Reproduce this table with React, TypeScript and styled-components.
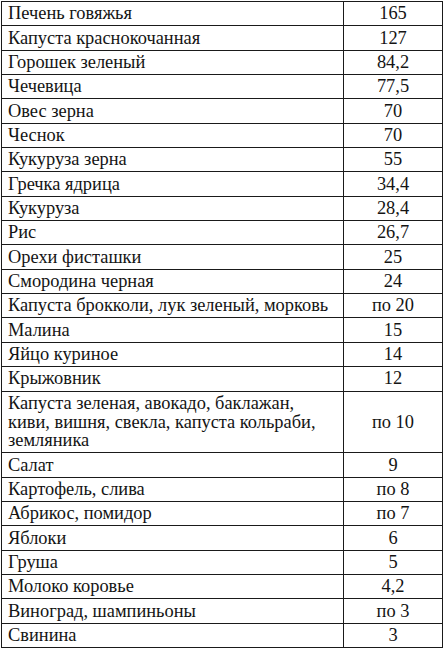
import React from 'react';
import styled, { createGlobalStyle } from 'styled-components';

const GlobalStyle = createGlobalStyle`
    html, body {
        margin: 0;
        padding: 0;
        background: #fff;
    }
    body {
        padding: 1px 0 0 1px;
    }
`;

const Table = styled.table`
    border-collapse: collapse;
    table-layout: fixed;
    width: 442px;
    font-family: "Liberation Serif", "DejaVu Serif", serif;
    font-size: 18.4px;
    color: #141414;
`;

const Row = styled.tr``;

const NameCell = styled.td`
    border: 1px solid #1a1a1a;
    padding: 2.3px 4px 2.3px 6px;
    line-height: 18.75px;
    text-align: left;
    vertical-align: middle;
    white-space: nowrap;
`;

const ValueCell = styled.td`
    border: 1px solid #1a1a1a;
    width: 90px;
    padding: 2.3px 4px;
    line-height: 18.75px;
    text-align: center;
    vertical-align: middle;
`;

const rows: [React.ReactNode, string][] = [
    ['Печень говяжья', '165'],
    ['Капуста краснокочанная', '127'],
    ['Горошек зеленый', '84,2'],
    ['Чечевица', '77,5'],
    ['Овес зерна', '70'],
    ['Чеснок', '70'],
    ['Кукуруза зерна', '55'],
    ['Гречка ядрица', '34,4'],
    ['Кукуруза', '28,4'],
    ['Рис', '26,7'],
    ['Орехи фисташки', '25'],
    ['Смородина черная', '24'],
    ['Капуста брокколи, лук зеленый, морковь', 'по 20'],
    ['Малина', '15'],
    ['Яйцо куриное', '14'],
    ['Крыжовник', '12'],
    [<>Капуста зеленая, авокадо, баклажан,<br />киви, вишня, свекла, капуста кольраби,<br />земляника</>, 'по 10'],
    ['Салат', '9'],
    ['Картофель, слива', 'по 8'],
    ['Абрикос, помидор', 'по 7'],
    ['Яблоки', '6'],
    ['Груша', '5'],
    ['Молоко коровье', '4,2'],
    ['Виноград, шампиньоны', 'по 3'],
    ['Свинина', '3'],
];

export default function App() {
    return (
        <>
            <GlobalStyle />
            <Table>
                <tbody>
                    {rows.map(([name, value], idx) => (
                        <Row key={idx}>
                            <NameCell>{name}</NameCell>
                            <ValueCell>{value}</ValueCell>
                        </Row>
                    ))}
                </tbody>
            </Table>
        </>
    );
}
